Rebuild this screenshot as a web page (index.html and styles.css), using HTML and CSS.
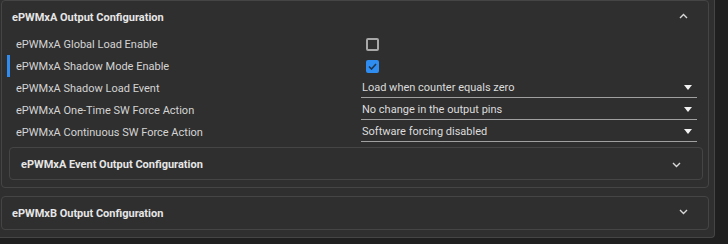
FILE: index.html
```html
<!DOCTYPE html>
<html lang="en">
<head>
    <meta charset="UTF-8">
    <title>ePWM Output Configuration</title>
    <link rel="stylesheet" href="styles.css">
</head>
<body>
    <div class="scroll">
        <section class="panel">
            <div class="panel-header">
                <span class="panel-title">ePWMxA Output Configuration</span>
                <svg class="chevron" width="9" height="6" viewBox="0 0 9 6"><polyline points="1,5 4.5,1.5 8,5" /></svg>
            </div>

            <div class="row">
                <span class="label">ePWMxA Global Load Enable</span>
                <span class="value"><span class="checkbox"></span></span>
            </div>
            <div class="row active">
                <span class="label">ePWMxA Shadow Mode Enable</span>
                <span class="value">
                    <span class="checkbox checked">
                        <svg width="9" height="7" viewBox="0 0 9 7"><polyline points="1,3.5 3.5,6 8,1" /></svg>
                    </span>
                </span>
            </div>
            <div class="row">
                <span class="label">ePWMxA Shadow Load Event</span>
                <span class="value"><span class="select">Load when counter equals zero<span class="arrow"></span></span></span>
            </div>
            <div class="row">
                <span class="label">ePWMxA One-Time SW Force Action</span>
                <span class="value"><span class="select">No change in the output pins<span class="arrow"></span></span></span>
            </div>
            <div class="row">
                <span class="label">ePWMxA Continuous SW Force Action</span>
                <span class="value"><span class="select">Software forcing disabled<span class="arrow"></span></span></span>
            </div>

            <div class="subpanel">
                <span class="panel-title">ePWMxA Event Output Configuration</span>
                <svg class="chevron" width="9" height="6" viewBox="0 0 9 6"><polyline points="1,1 4.5,4.5 8,1" /></svg>
            </div>
        </section>

        <section class="panel collapsed">
            <div class="panel-header">
                <span class="panel-title">ePWMxB Output Configuration</span>
                <svg class="chevron" width="9" height="6" viewBox="0 0 9 6"><polyline points="1,1 4.5,4.5 8,1" /></svg>
            </div>
        </section>
    </div>
</body>
</html>
```

FILE: styles.css
```css
:root {
    --bg-dark: #1f1f1f;
    --panel-bg: #2f2f2f;
    --border: #454545;
    --text: #d4d4d4;
    --title: #e6e6e6;
    --blue: #2f8cf0;
}

body {
    margin: 0;
    background-color: var(--bg-dark);
    font-family: Roboto, 'Liberation Sans', sans-serif;
    color: var(--text);
}

.scroll {
    box-sizing: border-box;
    width: 715px;
    height: 238px;
    padding: 0 5px 0 1px;
    background-color: var(--panel-bg);
    border-right: 1px solid var(--border);
    border-bottom: 1px solid var(--border);
    border-bottom-right-radius: 4px;
}

.panel {
    box-sizing: border-box;
    border: 1px solid var(--border);
    border-radius: 4px;
    padding-bottom: 7px;
    margin-bottom: 8px;
}

.panel.collapsed {
    padding-bottom: 0;
}

.panel-header {
    display: flex;
    align-items: center;
    justify-content: space-between;
    height: 32px;
    padding: 0 20px 0 10px;
}

.panel-title {
    font-size: 11px;
    font-weight: 700;
    color: var(--title);
}

.chevron polyline {
    fill: none;
    stroke: #d8d8d8;
    stroke-width: 1.4;
}

.panel-header .chevron {
    margin-top: -3px;
}

.row {
    display: flex;
    align-items: center;
    height: 22px;
    margin-left: 5px;
    border-left: 3px solid transparent;
    padding-left: 6px;
    font-size: 11px;
}

.row.active {
    border-left-color: var(--blue);
}

.label {
    width: 345px;
    flex: none;
}

.value {
    display: flex;
    align-items: center;
    width: 336px;
    height: 100%;
}

.checkbox {
    display: flex;
    align-items: center;
    justify-content: center;
    box-sizing: border-box;
    width: 13px;
    height: 13px;
    margin-left: 5px;
    border: 2px solid #a8a8a8;
    border-radius: 2px;
}

.checkbox.checked {
    background-color: var(--blue);
    border-color: var(--blue);
}

.checkbox svg polyline {
    fill: none;
    stroke: #1f3550;
    stroke-width: 1.6;
}

.select {
    display: flex;
    align-items: center;
    justify-content: space-between;
    box-sizing: border-box;
    width: 100%;
    height: 20px;
    margin-top: -1px;
    padding: 0 5px 0 1px;
    border-bottom: 1px solid #a0a0a0;
    color: #dcdcdc;
}

.arrow {
    width: 0;
    height: 0;
    border-left: 4px solid transparent;
    border-right: 4px solid transparent;
    border-top: 5px solid #f2f2f2;
}

.subpanel {
    display: flex;
    align-items: center;
    justify-content: space-between;
    box-sizing: border-box;
    height: 33px;
    margin: 4px 5px 0 7px;
    padding: 2px 21px 0 11px;
    border: 1px solid var(--border);
    border-radius: 4px;
}
```
